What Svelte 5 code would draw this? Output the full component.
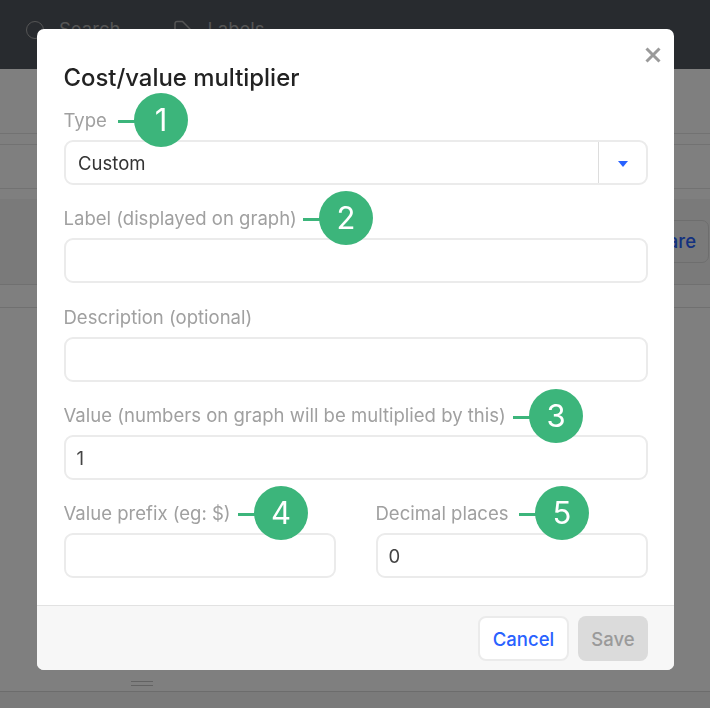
<script>
  const fields = [
    { label: 'Label (displayed on graph)', value: '' },
    { label: 'Description (optional)', value: '' },
    { label: 'Value (numbers on graph will be multiplied by this)', value: '1' }
  ];
  const marks = [
    { n: 1, x: 134, y: 120, lineX: 118 },
    { n: 2, x: 319, y: 218, lineX: 303 },
    { n: 3, x: 529, y: 416, lineX: 513 },
    { n: 4, x: 254, y: 513, lineX: 238 },
    { n: 5, x: 535, y: 513, lineX: 519 }
  ];
</script>

<div class="page">
  <header class="topbar">
    <span class="search-icon"></span><span class="nav nav-search">Search</span>
    <svg class="tag" width="18" height="18" viewBox="0 0 18 18"><path d="M1 3.5a2 2 0 0 1 2-2h5.500l8 8v8h-15.500z" fill="none" stroke="#aaa" stroke-width="1.500"/></svg><span class="nav">Labels</span>
  </header>
  <div class="rows">
    <div class="r1"></div>
    <div class="r2"></div>
    <div class="r3"><span class="share">Compare</span></div>
    <div class="r4"></div>
    <div class="r5"><span class="handle"></span></div>
    <div class="r6"></div>
  </div>
</div>

<div class="backdrop"></div>

<div class="modal">
  <div class="body">
    <button class="close" aria-label="Close">
      <svg width="16" height="16" viewBox="0 0 16 16"><path d="M1.500 1.500l13 13M14.500 1.500l-13 13" stroke="#9a9a9a" stroke-width="3"/></svg>
    </button>
    <h2>Cost/value multiplier</h2>
    <div class="field first">
      <div class="label">Type</div>
      <div class="select">
        <span class="sel-value">Custom</span>
        <span class="sel-arrow"><span class="tri"></span></span>
      </div>
    </div>
    {#each fields as f}
      <div class="field">
        <div class="label">{f.label}</div>
        <div class="input">{f.value}</div>
      </div>
    {/each}
    <div class="split">
      <div class="field">
        <div class="label">Value prefix (eg: $)</div>
        <div class="input"></div>
      </div>
      <div class="field">
        <div class="label">Decimal places</div>
        <div class="input">0</div>
      </div>
    </div>
  </div>
  <footer>
    <button class="btn cancel">Cancel</button>
    <button class="btn save">Save</button>
  </footer>
</div>

{#each marks as m}
  <span class="connector" style="left:{m.lineX}px;top:{m.y}px"></span>
  <span class="mark" style="left:{m.x}px;top:{m.y - 27}px">{m.n}</span>
{/each}

<style>
  :global(body) {
    margin: 0;
    background: #808080;
    font-family: Inter, "Liberation Sans", sans-serif;
    overflow: hidden;
  }
  .page {
    width: 710px;
    height: 708px;
    background: #fff;
    display: flex;
    flex-direction: column;
    overflow: hidden;
  }
  .topbar {
    height: 69px;
    flex: none;
    background: #50565f;
    display: flex;
    align-items: flex-start;
    padding: 18px 0 0 26px;
    box-sizing: border-box;
    color: #aaa;
    font-size: 18.5px;
    line-height: 22px;
  }
  .search-icon {
    width: 16px;
    height: 16px;
    border: 1.5px solid #aaa;
    border-radius: 50%;
    margin: 3px 15px 0 0;
  }
  .nav-search { margin-right: 54px; }
  .tag { margin: 2px 15px 0 0; }
  .rows { flex: 1; display: flex; flex-direction: column; background: #fff; }
  .r1 { height: 65px; flex: none; border-bottom: 1px solid #e4e4e4; box-sizing: border-box; }
  .r2 {
    height: 45px;
    flex: none;
    margin-top: 10px;
    border-top: 1px solid #e4e4e4;
    border-bottom: 1px solid #e4e4e4;
    box-sizing: border-box;
  }
  .r3 {
    height: 86px;
    flex: none;
    margin-top: 10px;
    background: #f5f5f5;
    border-bottom: 1px solid #e0e0e0;
    box-sizing: border-box;
    position: relative;
  }
  .r4 { height: 22px; flex: none; border-bottom: 1px solid #e0e0e0; }
  .r5 { flex: 1; position: relative; border-bottom: 1px solid #d8d8d8; }
  .r6 { height: 16px; flex: none; background: #f5f5f5; }
  .share {
    position: absolute;
    right: 1px;
    top: 21px;
    height: 43px;
    box-sizing: border-box;
    padding: 0 12px;
    line-height: 41px;
    border: 1px solid #dcdcdc;
    border-radius: 7px;
    color: #2962ff;
    font-size: 18.5px;
    font-weight: 500;
  }
  .handle {
    position: absolute;
    left: 131px;
    bottom: 5px;
    width: 22px;
    height: 3px;
    border-top: 1px solid #c4c4c4;
    border-bottom: 1px solid #c4c4c4;
  }
  .backdrop {
    position: fixed;
    inset: 0;
    background: rgba(0, 0, 0, 0.5);
  }
  .modal {
    position: absolute;
    left: 37px;
    top: 29px;
    width: 637px;
    height: 641px;
    background: #fff;
    border-radius: 7px;
    display: flex;
    flex-direction: column;
    overflow: hidden;
  }
  .body {
    flex: 1;
    padding: 35px 26px 0 26.5px;
    position: relative;
    box-sizing: border-box;
  }
  h2 {
    margin: 0;
    font-size: 23.9px;
    line-height: 28px;
    font-weight: 500;
    color: #222;
  }
  .close {
    position: absolute;
    right: 13px;
    top: 18px;
    padding: 0;
    border: 0;
    background: none;
    width: 16px;
    height: 16px;
  }
  .close svg { display: block; }
  .field { margin-top: 21.25px; }
  .field.first { margin-top: 16px; }
  .label {
    font-size: 18.55px;
    line-height: 24px;
    color: #a0a0a0;
    margin-bottom: 8px;
    white-space: nowrap;
  }
  .input, .select {
    height: 45px;
    box-sizing: border-box;
    border: 2px solid #ebebeb;
    border-radius: 9px;
    padding: 0 11px;
    line-height: 42px;
    font-size: 18.55px;
    color: #444;
    background: #fff;
  }
  .select {
    display: flex;
    padding: 0;
    color: #333;
  }
  .sel-value { flex: 1; padding-left: 12.5px; }
  .sel-arrow {
    width: 47px;
    border-left: 1px solid #ddd;
    display: flex;
    align-items: center;
    justify-content: center;
  }
  .tri {
    width: 0;
    height: 0;
    border-left: 5px solid transparent;
    border-right: 5px solid transparent;
    border-top: 6px solid #2962ff;
    margin-top: 3px;
  }
  .split {
    display: grid;
    grid-template-columns: 272px 272.5px;
    column-gap: 40px;
  }
  footer {
    flex: none;
    height: 65px;
    box-sizing: border-box;
    background: #f7f7f7;
    border-top: 1px solid #e2e2e2;
    display: flex;
    justify-content: flex-end;
    gap: 9px;
    padding: 10px 26px 0 0;
  }
  .btn {
    height: 45px;
    box-sizing: border-box;
    border-radius: 8px;
    font: 500 18.5px Inter, "Liberation Sans", sans-serif;
    padding: 0;
  }
  .cancel {
    width: 91px;
    background: #fff;
    border: 2px solid #ebebeb;
    color: #2962ff;
  }
  .save {
    width: 70px;
    background: #dbdbdb;
    border: 0;
    color: #9a9a9a;
  }
  .mark {
    position: absolute;
    width: 54px;
    height: 54px;
    border-radius: 50%;
    background: #3cb57b;
    color: #fff;
    font-size: 31px;
    line-height: 54px;
    text-align: center;
  }
  .connector {
    position: absolute;
    width: 17px;
    height: 3px;
    background: #3cb57b;
  }
</style>
